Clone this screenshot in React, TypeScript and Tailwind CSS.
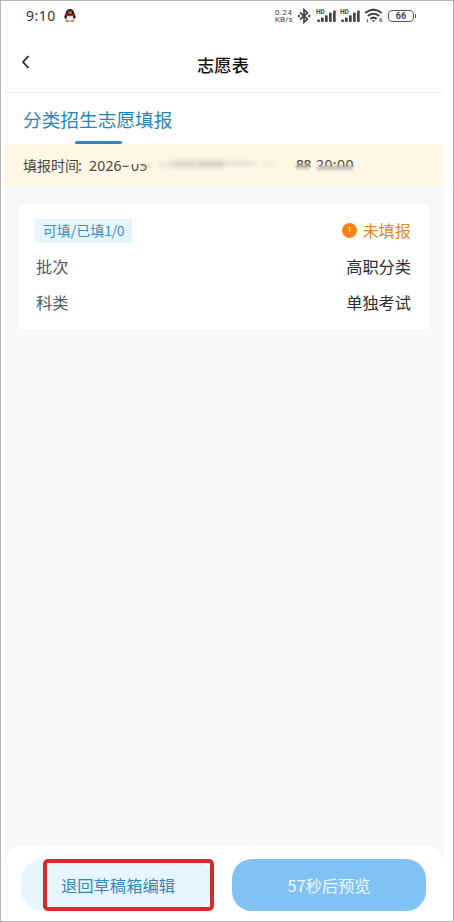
import React from 'react';

function Penguin() {
  return (
    <svg width="12" height="13" viewBox="0 0 12 13">
      <ellipse cx="3.6" cy="12" rx="2.3" ry="0.9" fill="#d98a3d" />
      <ellipse cx="8.4" cy="12" rx="2.3" ry="0.9" fill="#d98a3d" />
      <path d="M6 0C3.6 0 2 1.4 1.8 4C.6 6 .1 8 .6 9.600C1 10 1.500 9.400 2 9C2.400 11 4 12.200 6 12.200S9.600 11 10 9C10.500 9.400 11 10 11.400 9.600C11.900 8 11.400 6 10.200 4C10 1.400 8.400 0 6 0Z" fill="#2a1c1e" />
      <ellipse cx="6" cy="9" rx="3.300" ry="2.900" fill="#f6efed" />
      <path d="M1.800 5Q6 7 10.200 5L10.300 6.300Q6 8.400 1.700 6.300Z" fill="#c8342c" />
      <ellipse cx="6" cy="4" rx="2.300" ry="0.900" fill="#d9653a" />
      <circle cx="4.900" cy="2.300" r="0.600" fill="#b9a5a3" />
      <circle cx="7.100" cy="2.300" r="0.600" fill="#b9a5a3" />
    </svg>
  );
}

function Bluetooth() {
  return (
    <svg width="14" height="16" viewBox="0 0 14 16" fill="none" stroke="#444" strokeWidth="1.700">
      <path d="M3 4.500L10.500 11L7 14.300V1.700L10.500 5L3 11.500" />
      <circle cx="1.700" cy="8" r="1.200" fill="#444" stroke="none" />
      <circle cx="12.300" cy="8" r="1.200" fill="#444" stroke="none" />
    </svg>
  );
}

function Signal() {
  return (
    <svg width="21" height="15" viewBox="0 0 21 15" fill="#444">
      <text x="0" y="5.500" fontSize="6.500" fontWeight="700" fontFamily="Roboto, sans-serif">HD</text>
      <rect x="1.200" y="11.500" width="2.700" height="2.500" rx="0.800" />
      <rect x="5" y="9.500" width="2.700" height="4.500" rx="0.800" />
      <rect x="9" y="7.300" width="2.700" height="6.700" rx="0.800" />
      <rect x="13" y="4.500" width="2.700" height="9.500" rx="0.800" />
      <rect x="17" y="2.500" width="2.700" height="11.500" rx="0.800" />
    </svg>
  );
}

function Wifi() {
  return (
    <svg width="20" height="15" viewBox="0 0 20 15" fill="none" stroke="#444" strokeWidth="2">
      <path d="M1.200 5Q9.500 -1.800 17.800 5" />
      <path d="M3.800 8Q9.500 3.500 15.200 8" />
      <path d="M6.300 10.900Q9.500 8.300 12.700 10.900" />
      <path d="M9.500 14.300L7.800 12.300H11.200Z" fill="#444" stroke="none" />
      <path d="M3.500 11V14M2.300 12.800L3.500 14" strokeWidth="0.800" />
      <text x="15" y="14" fontSize="6" fontWeight="700" fill="#555" stroke="none" fontFamily="Roboto, sans-serif">6</text>
    </svg>
  );
}

function Battery() {
  return (
    <div className="flex items-center">
      <div className="flex h-[12px] w-[26px] items-center justify-center rounded-[4px] border border-[#555] pt-px font-['Roboto'] text-[9px] leading-none font-bold text-[#444]">
        66
      </div>
      <div className="ml-px h-[4px] w-[1px] bg-[#555]" />
    </div>
  );
}

function StatusBar() {
  return (
    <div className="flex h-[29px] items-center pl-[22px]">
      <span className="w-[38px] font-['Noto_Sans'] text-[14px] leading-none tracking-[0.500px] text-[#333]">9:10</span>
      <Penguin />
      <div className="ml-[199px] flex items-center">
        <div className="w-[22px] pt-px font-['Roboto'] text-[8px] leading-[7.500px] whitespace-nowrap text-[#444]">
          <div className="tracking-[0.500px]">0.24</div>
          <div className="tracking-[0.100px]">KB/s</div>
        </div>
        <Bluetooth />
        <div className="ml-[5px] flex gap-[3px]">
          <Signal />
          <Signal />
        </div>
        <div className="ml-[3px]">
          <Wifi />
        </div>
        <div className="ml-[4px]">
          <Battery />
        </div>
      </div>
    </div>
  );
}

function Header() {
  return (
    <header className="grid h-[63px] w-[438px] grid-cols-[1fr_auto_1fr] items-center border-b border-[#eeeff1]">
      <svg className="mt-[2px] ml-[17px]" width="10" height="14" viewBox="0 0 10 14" fill="none" stroke="#222" strokeWidth="1.800">
        <path d="M7.500 1L2 7L7.500 13" strokeLinejoin="round" />
      </svg>
      <h1 className="pt-[8px] text-[17.300px] leading-none font-medium text-[#111]">志愿表</h1>
      <span />
    </header>
  );
}

function TimeBar() {
  return (
    <div className="flex h-[42px] items-center bg-[#fef7e6] pl-[19px] text-[14px] leading-[20px] text-[#4a453d]">
      <span className="w-[66px] whitespace-nowrap">
        填报时间<span className="-ml-px inline-block w-[8px]">:</span>
      </span>
      <span className="w-[42px] pt-px font-['Noto_Sans'] text-[14px] tracking-[0.200px] whitespace-nowrap">2026−</span>
      <span className="relative w-[19px] pt-px font-['Noto_Sans'] text-[14px] tracking-[0.300px]">
        05
        <span className="absolute top-[2px] left-0 h-[7px] w-[20px] bg-[#fef7e6]" />
        <span className="absolute top-[9px] left-[10px] h-[5px] w-[10px] bg-[#b9b2a5] opacity-50 blur-[2px]" />
      </span>
      <span className="-mt-[2px] ml-[9px] h-[5px] w-[13px] bg-[#e9e2d4] blur-[2px]" />
      <span className="-mt-[2px] h-[6px] w-[25px] bg-[#d9d2c4] blur-[2px]" />
      <span className="-mt-[2px] h-[6px] w-[27px] bg-[#d5cdbf] blur-[2px]" />
      <span className="-mt-[4px] h-[3px] w-[32px] bg-[#dbd4c6] blur-[2px]" />
      <span className="-mt-[4px] ml-[7px] h-[3px] w-[11px] bg-[#e9e2d3] blur-[2px]" />
      <span className="relative ml-[22px] flex gap-[5px] font-['Noto_Sans'] text-[14px]">
        <span className="w-[15px] tracking-[-0.600px]">88</span>
        <span className="tracking-[0.400px]">20:00</span>
        <span className="absolute top-[12px] left-0 h-[5px] w-[60px] bg-[#fef7e6]" />
        <span className="absolute top-[9px] left-0 h-[5px] w-[14px] bg-[#b4ac9f] opacity-75 blur-[1.500px]" />
        <span className="absolute top-[10px] left-[21px] h-[5px] w-[36px] bg-[#b9b1a4] opacity-75 blur-[1.500px]" />
      </span>
    </div>
  );
}

function Row({ label, value }: { label: string; value: string }) {
  return (
    <div className="flex h-[36px] items-center justify-between text-[16.200px] leading-none">
      <span className="pl-px text-[#555a62]">{label}</span>
      <span className="text-[#2b2d31]">{value}</span>
    </div>
  );
}

function Card() {
  return (
    <section className="mx-[14px] mt-[18px] h-[125px] rounded-[2px] bg-white pt-[14px] pr-[19px] pl-[17px]">
      <div className="flex h-[25px] items-center justify-between">
        <span className="flex h-[24px] w-[97px] items-center justify-center bg-[#e6f5fd] pb-[2px] text-[14px] leading-none whitespace-nowrap text-[#3f8fbd]">
          可填/已填<span className="tracking-[-0.300px]">1/0</span>
        </span>
        <span className="flex items-center gap-[5px] text-[16.200px] leading-none text-[#e08a25]">
          <svg width="15" height="15" viewBox="0 0 15 15">
            <circle cx="7.500" cy="7.500" r="7.500" fill="#f78212" />
            <path d="M7.500 3.500V9M7.500 10V11.200" stroke="#ffe0b8" strokeWidth="1.300" />
          </svg>
          未填报
        </span>
      </div>
      <div className="mt-[5px]">
        <Row label="批次" value="高职分类" />
        <Row label="科类" value="单独考试" />
      </div>
    </section>
  );
}

function Footer() {
  return (
    <footer className="flex h-[75px] gap-[19px] rounded-t-[18px] bg-white pt-[13px] pl-[17px]">
      <button className="relative flex h-[52px] w-[192px] items-center justify-center rounded-[22px] bg-[#e7f5fe] pl-[2px] text-[16.300px] leading-none text-[#3288ba]">
        退回草稿箱编辑
        <span className="absolute top-0 left-[22px] h-[52px] w-[171px] rounded-[5px] border-[4px] border-[#d52b29]" />
      </button>
      <button className="flex h-[52px] w-[194px] items-center justify-center rounded-[20px] bg-[#80c2f5] text-[16.300px] leading-none text-[#f0f9ff]">
        57秒后预览
      </button>
    </footer>
  );
}

export default function App() {
  return (
    <div className="h-[922px] w-[454px] overflow-hidden border border-[#b5b5b5] bg-white pl-[3px] font-['Noto_Sans_CJK_SC',sans-serif]">
      <div className="flex h-full flex-col">
        <StatusBar />
        <Header />
        <nav className="flex h-[51px] flex-col items-start pt-[15px] pl-[19px]">
          <span className="text-[18.700px] leading-[21px] text-[#2784ba]">分类招生志愿填报</span>
          <span className="mt-[12px] ml-[52px] h-[4px] w-[47px] rounded-full bg-[#2f86c3]" />
        </nav>
        <div className="flex w-[440px] flex-1 flex-col bg-[#f5f7f9]">
          <TimeBar />
          <Card />
          <div className="flex-1" />
          <Footer />
        </div>
      </div>
    </div>
  );
}
